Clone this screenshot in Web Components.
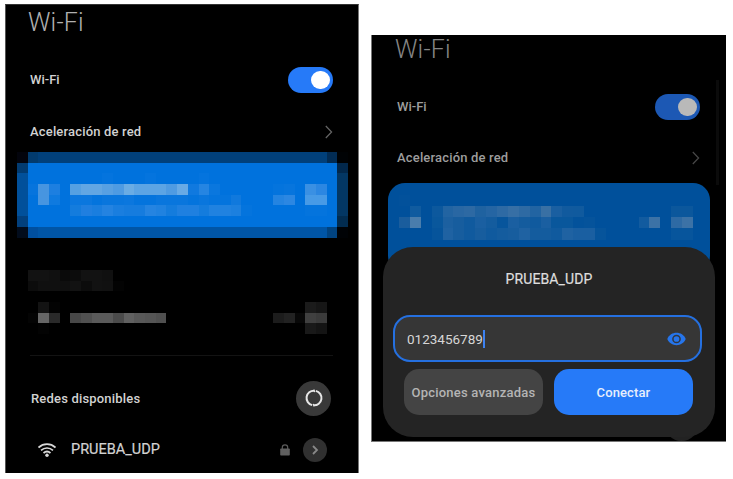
<!DOCTYPE html>
<html lang="es">
<head>
<meta charset="utf-8">
<title>Wi-Fi</title>
<style>
body{margin:0;width:733px;height:479px;overflow:hidden;background:#fff;font-family:Roboto,"Liberation Sans",sans-serif}
</style>
</head>
<body>
<wifi-page></wifi-page>
<script>
const define = (name, html, setup) => customElements.define(name, class extends HTMLElement {
  connectedCallback() {
    if (this.shadowRoot) return;
    const root = this.attachShadow({mode: 'open'});
    root.innerHTML = html;
    if (setup) setup(this, root);
  }
});

// Censored area: grid of coloured cells. Each entry is "row,column[xWidth[xHeight]],colour,colour..."
define('pixel-mosaic', `<style>:host{display:block;flex:none}svg{display:block;width:100%;height:100%}</style><svg preserveAspectRatio="none" shape-rendering="crispEdges"></svg>`,
  (el, root) => {
    const svg = root.querySelector('svg');
    svg.setAttribute('viewBox', `0 0 ${el.getAttribute('cols')} ${el.getAttribute('rows')}`);
    svg.innerHTML = el.getAttribute('cells').trim().split(/\s+/).map(s => {
      const [r, c, ...colors] = s.split(',');
      const m = c.match(/^(\d+)(?:x(\d+))?(?:x(\d+))?$/), w = +(m[2] || 1), h = +(m[3] || 1);
      return colors.map((f, i) => `<rect x="${+m[1] + i * w}" y="${r}" width="${w}" height="${h}" fill="#${f}"/>`).join('');
    }).join('');
  });

define('toggle-switch', `<style>:host{display:flex;box-sizing:border-box;width:45px;height:26px;border-radius:13px;background:var(--track,#267af8);padding:4px 3.5px;justify-content:flex-end}i{width:18.5px;height:18.5px;border-radius:50%;background:var(--knob,#fff)}</style><i></i>`);

define('chevron-icon', `<style>:host{display:block;width:8px;height:14px}svg{display:block}</style><svg width="8" height="14" viewBox="0 0 8 14" fill="none" stroke="currentColor" stroke-width="1.2"><path d="M.8 1 6.6 7 .8 13"/></svg>`);

define('list-row', `<style>:host{display:flex;align-items:center;justify-content:space-between;box-sizing:border-box;padding:0 27px 0 25px;font-size:13px;font-weight:500;line-height:18px;color:var(--ink,#d2d2d2);flex:none}</style><slot></slot><slot name="end"></slot>`);

define('phone-panel', `<style>:host{display:flex;flex-direction:column;box-sizing:border-box;background:#000;position:relative;overflow:hidden;flex:none}</style><slot></slot>`);

define('scan-button', `<style>:host{display:flex;align-items:center;justify-content:center;width:35px;height:35px;border-radius:50%;background:#393939}</style>
<svg width="20" height="20" viewBox="-10 -10 20 20" fill="none" stroke="#e6e6e6" stroke-width="2"><path d="M1.8-7.1A7.3 7.3 0 0 1-.3 7.3"/><path d="M-1.8 7.1A7.3 7.3 0 0 1 .3-7.3"/><path d="M0-8.300.7-5.800M0 8.300-.7 5.800" stroke-width="1.200"/></svg>`);

define('network-item', `<style>:host{display:flex;align-items:center;height:50px;padding:0 31px 0 31.500px;color:#d2d2d2;font-size:14.500px;line-height:20px;flex:none}
.n{flex:1;margin-left:15.500px;-webkit-text-stroke:.2px #d2d2d2}.go{display:flex;align-items:center;justify-content:center;width:24px;height:24px;border-radius:50%;background:#303030;margin-left:13.5px}svg{display:block;flex:none}</style>
<svg width="18" height="14" viewBox="0 0 18 14" fill="none" stroke="#d8d8d8" stroke-width="1.700"><path d="M.5 4.500C5.500.1 12.500.1 17.500 4.500M3 7.300C6.500 4.200 11.500 4.200 15 7.300M5.500 10C7.600 8.200 10.400 8.200 12.500 10"/><circle cx="9" cy="12.200" r="1.700" fill="#d8d8d8" stroke="none"/></svg>
<span class="n"><slot></slot></span>
<svg width="10" height="12" viewBox="0 0 10 12"><path d="M2.300 5V3.500a2.700 2.700 0 0 1 5.400 0V5" fill="none" stroke="#5c5c5c" stroke-width="1.200"/><rect x=".2" y="4.500" width="9.600" height="7" rx=".8" fill="#606060"/></svg>
<span class="go"><svg width="8" height="10" viewBox="0 0 8 10" fill="none" stroke="#888" stroke-width="1.800"><path d="M2 1 6 5 2 9"/></svg></span>`);

define('password-field', `<style>:host{display:flex;align-items:center;box-sizing:border-box;width:309px;height:47px;margin-left:-3px;border:2px solid #2570e0;border-radius:17px;background:#363636;padding:0 14px 0 12px;color:#d6d6d6;font-size:13.500px;line-height:18px}
i{flex:none;width:2px;height:18px;background:#3d82f0}.s{flex:1}svg{display:block}</style><slot></slot><i></i><span class="s"></span>
<svg width="19" height="14" viewBox="0 0 19 14"><path d="M.3 7C3.500-1.200 15.500-1.200 18.700 7 15.500 15.200 3.500 15.200.3 7Z" fill="#2675eb"/><circle cx="9.500" cy="7" r="3.600" fill="none" stroke="#30363f" stroke-width="1.500"/></svg>`);

define('action-button', `<style>:host{display:flex;align-items:center;justify-content:center;box-sizing:border-box;width:139px;height:46px;padding-top:2px;border-radius:15px;background:#444;color:#b4b4b4;font-size:13px;font-weight:500;line-height:18px;letter-spacing:.22px;white-space:nowrap}:host([primary]){background:#267af8;color:#e6eefc;letter-spacing:.1px}</style><slot></slot>`);

define('connect-sheet', `<style>:host{position:absolute;left:11px;top:212px;width:332px;height:190px;box-sizing:border-box;border-radius:30px;background:#242424;display:flex;flex-direction:column;align-items:center;padding-top:22px}
h2{margin:0 0 26px;font-size:14px;line-height:20px;font-weight:400;color:#dedede;letter-spacing:.1px;-webkit-text-stroke:.2px #dedede}.b{display:flex;gap:11px;margin:7px 1.200px 0 0}</style>
<h2><slot></slot></h2><password-field>0123456789</password-field><div class="b"><action-button>Opciones avanzadas</action-button><action-button primary>Conectar</action-button></div>`);

define('wifi-page', `<style>
:host{display:flex;align-items:flex-start;width:733px;height:479px;box-sizing:border-box;padding:4px 0 0 5px}
.left{width:354px;height:469px;border-right:1px solid #777;border-left:1px solid #555;border-top:1px solid #333}
.right{width:355px;height:407px;margin:31px 0 0 12px;border-left:1px solid #777;border-bottom:1px solid #777;--ink:#9d9d9d;--track:#1c58b4;--knob:#b9b9b9}
h1{margin:0;font-size:25px;line-height:30px;font-weight:300;color:#b0b0b0;letter-spacing:.2px;flex:none}
.left h1{height:46px;padding:3px 0 0 22px}.right h1{height:46.500px;padding:0 0 0 23px;margin-top:-.5px;color:#858585}
.w{height:51px}.a{height:41px;margin-top:6px;letter-spacing:.17px}.w{padding-right:25px}.right .a{margin-top:5.500px}.right .w{padding-right:26px}
.left .w,.left .a{padding-left:24px}.left .a{padding-right:25px}.right .a{padding-right:26px}
.r{letter-spacing:.18px}.r span{margin-top:2px}
chevron-icon{color:#666}.right chevron-icon{color:#484848}
.m1{width:331px;height:85.500px;margin-left:11.300px}
.m2{width:331px;height:64px;margin:32.800px 0 0 11.300px}
hr{border:0;height:1px;width:303px;margin:20.700px 0 16px 24px;background:#131313;flex:none}
.card{margin:4px 0 0 16px;width:322px;height:90px;border-radius:17px;background:#00509b;flex:none;padding:12.700px 0 0 11px;box-sizing:border-box}
.m3{width:294px;height:44.500px}
.bar{position:absolute;left:343.500px;top:45px;width:3px;height:105px;background:#0b0b0b}
.scan{position:absolute;left:292px;bottom:0;width:35px;height:35px;border-radius:50%;background:#222}
</style>
<phone-panel class="left">
<h1>Wi-Fi</h1>
<list-row class="w">Wi-Fi<toggle-switch slot="end"></toggle-switch></list-row>
<list-row class="a">Aceleración de red<chevron-icon slot="end"></chevron-icon></list-row>
<pixel-mosaic class="m1" cols="31" rows="8" cells="
0,0,03040c,023b6e 0,2x27,01407a 0,29,022c54,000204
1,0,023b70 1,1x29x6,0072dd 1,30,02284c
2,0x1x4,01509a 2,30x1x4,033764 6,0,02407d 6,30,022c50
7,0,020c1c,004f9f 7,2x27,0055a6 7,29,014380,000205
2,8,0474de 2,12,0474de 2,17,0474de
3,1,0674dd,4795e0,1d7fe0
3,5,55a0e2,62a6e3,62a6e3,58a0e2,4f9be2,6aace4,5ca4e4,5ca4e4,5ca4e4,4f9be2,68aae5,1079df,2585e2,0a77de
4,2,4795e0,0f7adf 4,5,0b77de,0b77de,0474dd,0976dd,0976dd,0b77de,0474dd,0474dd,0976dd,0976dd,0976dd,0474dd,0976dd,0474dd,0474dd,1079dd
5,5,147cdd,207fe0,1a7edf,2483e1,1a7edf,167cde,167cde,2584e1,2082e0,147cdd,1f80e0,1f80e0,147cdd,2082e0,2082e0,1c80df,0474dd
3,24,0474dd,0775dd 4,24,2484e1,2c87e2 3,27,3a90e3,2c87e2 4,27,479ae6,479ae6 5,27,0474dd,0474dd"></pixel-mosaic>
<pixel-mosaic class="m2" cols="31" rows="6" cells="
0,1,121212,121212,101010,0a0a0a,0c0c0c,121212,121212,101010
1,1,0c0c0c,101010,101010,0f0f0f,121212,0c0c0c,121212,111111,030303
3,2,131313,030303 4,1,040404,666666,2a2a2a 5,2,030303
4,5,484848,505050,5a5a5a,5a5a5a,4b4b4b,606060,585858,555555,505050
4,24,1c1c1c,222222,080808,404040,3b3b3b 3,27,1b1b1b,161616 5,27,191919,141414"></pixel-mosaic>
<hr>
<list-row class="r" style="height:53px"><span>Redes disponibles</span><scan-button slot="end"></scan-button></list-row>
<network-item>PRUEBA_UDP</network-item>
</phone-panel>
<phone-panel class="right">
<h1>Wi-Fi</h1>
<list-row class="w">Wi-Fi<toggle-switch slot="end"></toggle-switch></list-row>
<list-row class="a">Aceleración de red<chevron-icon slot="end"></chevron-icon></list-row>
<div class="card"><pixel-mosaic class="m3" cols="27" rows="4" cells="
0,0,02519b 1,1,105b9f 1,3,0c589d,2264a2,2967a3,2d69a3,1f62a0,2565a3,2e6aa4,376fa5,2e6aa3,2264a2,3970a4,1a5fa1,115a9e,105a9e
2,0,1a5d9d,4a7dac 2,3,09579c,1c60a0,175d9e,105a9e,1a5fa1,145c9e,07559c,1a5fa1,145c9e,105a9e,1a5fa1,09579c,09579c,03529b,05539b
3,3,06549b,1f62a2,175d9e,105a9e,175d9e,105a9e,145c9e,175d9e,1f62a2,145c9e,145c9e,105a9e,1f62a2,1a5fa1,1a5fa1,06549b
2,22,125b9f,3c72a6 1,25,0b579c,0b579c 2,25,2e6aa4,3c72a6 3,25,07559c,07559c"></pixel-mosaic></div>
<div class="bar"></div><div class="scan"></div>
<connect-sheet>PRUEBA_UDP</connect-sheet>
</phone-panel>`);
</script>
</body>
</html>
